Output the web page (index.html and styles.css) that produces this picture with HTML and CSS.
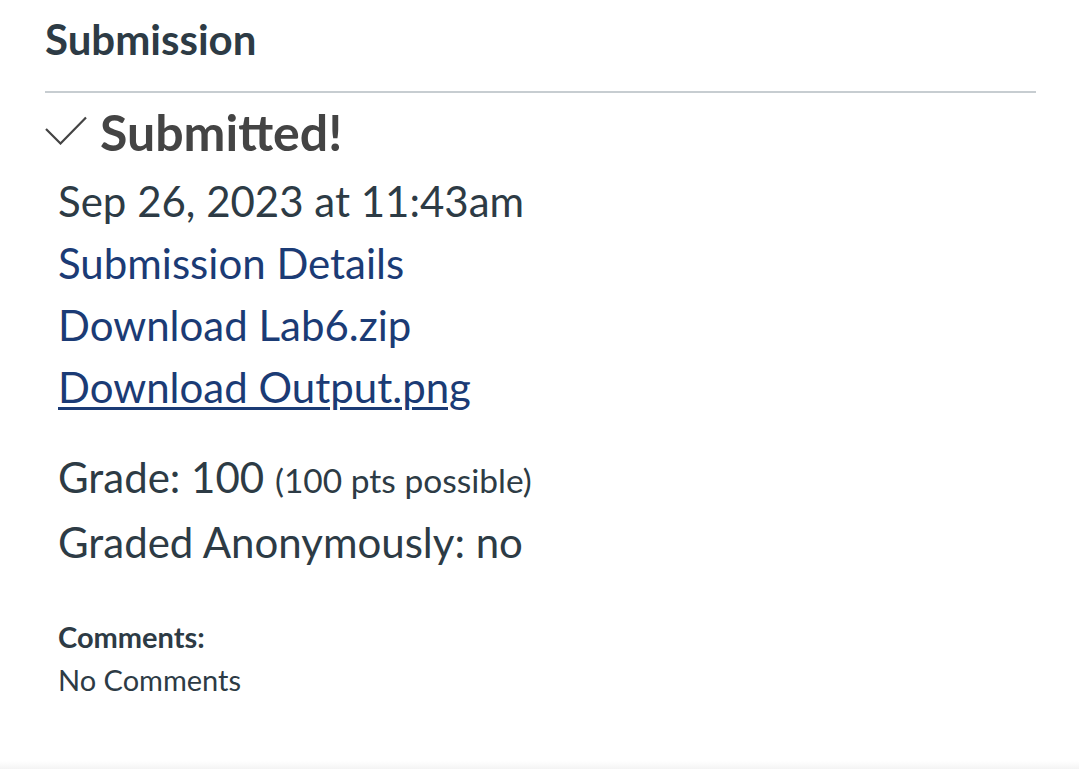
FILE: index.html
```html
<!DOCTYPE html>
<html>
<head>
<meta charset="utf-8">
<link rel="stylesheet" href="styles.css">
</head>
<body>
<div class="page">
  <h2 class="title">Submission</h2>
  <div class="rule"></div>
  <div class="status">
    <svg class="check" viewBox="0 0 42 29" width="42" height="29"><path d="M1 13 L15.5 27.5 L41 1.5" fill="none" stroke="#444" stroke-width="2.2"/></svg>
    <span class="status-text">Submitted!</span>
  </div>
  <div class="details">
    <div class="line">Sep 26, 2023 at 11:43am</div>
    <div class="line"><a class="link" href="#">Submission Details</a></div>
    <div class="line"><a class="link" href="#">Download Lab6.zip</a></div>
    <div class="line"><a class="link underline" href="#">Download Output.png</a></div>
  </div>
  <div class="grades">
    <div class="line">Grade: 100 <span class="small">(100 pts possible)</span></div>
    <div class="line">Graded Anonymously: no</div>
  </div>
  <div class="comments">
    <div class="comments-label">Comments:</div>
    <div class="comments-text">No Comments</div>
  </div>
</div>
<div class="footer-shade"></div>
</body>
</html>
```
FILE: styles.css
```css
html, body {
  margin: 0;
  padding: 0;
  background: #fff;
}
body {
  font-family: Lato, "Liberation Sans", sans-serif;
  color: #2d3b45;
  width: 1079px;
  height: 769px;
  overflow: hidden;
  display: flex;
  flex-direction: column;
}
.page {
  flex: 1;
  padding: 11px 43px 0 45px;
}
.title {
  margin: 0;
  font-size: 42px;
  font-weight: 700;
  line-height: 56px;
  color: #2d3b45;
}
.rule {
  height: 2px;
  background: #c7cdd1;
  margin-top: 24px;
}
.status {
  display: flex;
  align-items: center;
  gap: 13px;
  margin-top: 9px;
  height: 60px;
}
.check {
  display: block;
  margin-left: 0;
  margin-top: -3px;
}
.status-text {
  font-size: 50px;
  font-weight: 700;
  line-height: 60px;
  color: #444;
}
.details {
  padding-left: 13px;
  margin-top: 8px;
}
.line {
  font-size: 42px;
  line-height: 62px;
}
.link {
  color: #1b3b75;
  text-decoration: none;
}
.link.underline {
  text-decoration: underline;
  text-decoration-thickness: 3px;
  text-underline-offset: 4px;
}
.grades {
  padding-left: 13px;
  margin-top: 28px;
}
.small {
  font-size: 33.5px;
}
.comments {
  padding-left: 13px;
  margin-top: 43px;
}
.comments-label {
  font-size: 29px;
  font-weight: 700;
  line-height: 42px;
}
.comments-text {
  font-size: 29px;
  line-height: 43px;
}
.footer-shade {
  height: 8px;
  background: linear-gradient(#fff, #f4f4f4);
}
```
